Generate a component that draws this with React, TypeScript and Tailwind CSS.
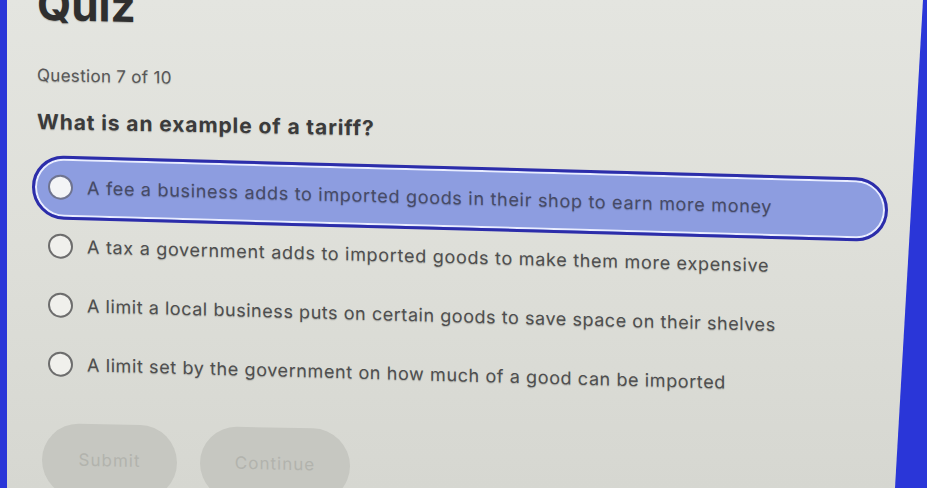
const options = [
  { text: 'A fee a business adds to imported goods in their shop to earn more money', tracking: 'tracking-[0.7px]' },
  { text: 'A tax a government adds to imported goods to make them more expensive', tracking: 'tracking-[0.7px]' },
  { text: 'A limit a local business puts on certain goods to save space on their shelves', tracking: 'tracking-[0.55px]' },
  { text: 'A limit set by the government on how much of a good can be imported', tracking: 'tracking-[0.6px]' },
];

export default function App() {
  const selected = 0;

  return (
    <div className="h-[488px] w-full overflow-hidden bg-[#2a36d8] font-['Inter','Noto_Sans',sans-serif]">
      <div className="ml-[7px] flow-root h-full bg-linear-to-b from-[#e4e5e0] via-[#dedfd9] to-[#d6d7d1] pl-[30px] [clip-path:polygon(0_0,916px_0,888px_100%,0_100%)]">
        <div className="origin-left skew-y-[1.1deg] [text-shadow:0_1px_1px_rgba(0,0,0,0.18)]">
          <h1 className="-mt-[18px] text-[44px] leading-none font-bold text-[#2f2f2f]">Quiz</h1>
          <p className="mt-[37px] text-[17px] leading-6 tracking-[0.3px] text-[#575757]">Question 7 of 10</p>
          <h2 className="mt-[21px] text-[21px] leading-7 font-bold tracking-[0.9px] text-[#3b3b3b]">
            What is an example of a tariff?
          </h2>

          <div className="mt-[21px] -ml-[5px] w-[856px] origin-left skew-y-[0.45deg]">
            {options.map((o, i) => (
              <div key={o.text} className="flex h-[59px] items-center">
                <div
                  className={
                    i === selected
                      ? 'flex h-[64px] w-full items-center rounded-full border-[3px] border-[#2c2daa] bg-[#8d9de0] pl-[13px] shadow-[inset_0_0_0_2px_#e9edff]'
                      : 'flex h-[64px] w-full items-center rounded-full border-[3px] border-transparent pl-[13px]'
                  }
                >
                  <span
                    className={
                      i === selected
                        ? 'h-[25px] w-[25px] shrink-0 rounded-full border-2 border-[#6f7490] bg-[#f3f4f6]'
                        : 'h-[25px] w-[25px] shrink-0 rounded-full border-2 border-[#6d6d6d] bg-[#f0f0ec]'
                    }
                  />
                  <span
                    className={`ml-[14px] text-[18px] ${o.tracking} ${i === selected ? 'text-[#464a66]' : 'text-[#4e4e4e]'}`}
                  >
                    {o.text}
                  </span>
                </div>
              </div>
            ))}
          </div>

          <div className="mt-[30px] flex gap-[23px] pl-[5px]">
            <button className="h-[74px] w-[135px] rounded-full bg-[#c6c7c1] text-[17px] tracking-[1px] text-[#b2b3ad] [text-shadow:none]">
              Submit
            </button>
            <button className="h-[74px] w-[150px] rounded-full bg-[#c6c7c1] text-[17px] tracking-[1px] text-[#b2b3ad] [text-shadow:none]">
              Continue
            </button>
          </div>
        </div>
      </div>
    </div>
  );
}
